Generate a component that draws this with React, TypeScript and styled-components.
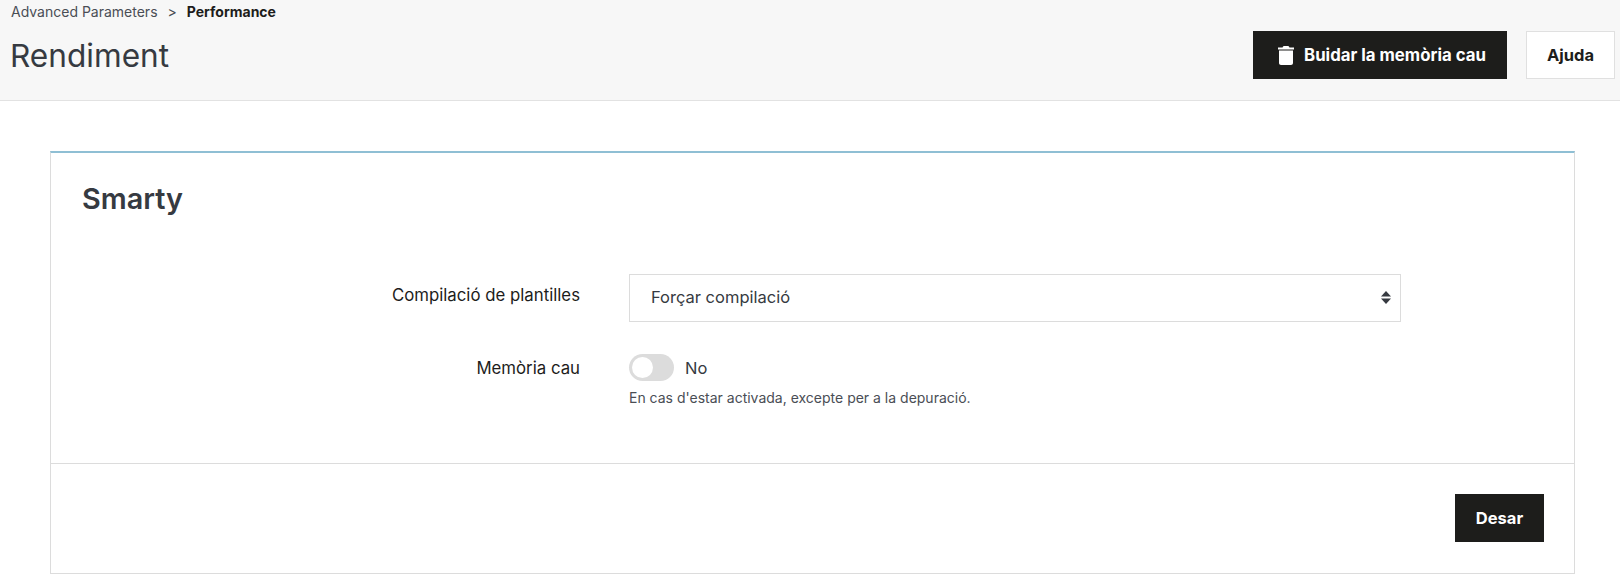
import React from "react";
import styled, { createGlobalStyle } from "styled-components";

const Global = createGlobalStyle`
  html, body { margin: 0; padding: 0; background: #fff; }
  body { font-family: Inter, "Noto Sans", sans-serif; color: #363a41; }
`;
const Page = styled.div`
  width: 1620px;
  height: 577px;
  overflow: hidden;
`;
const Header = styled.header`
  height: 100px;
  background: #f7f7f7;
  border-bottom: 1px solid #e2e2e2;
  padding: 0 5px 0 11px;
  display: flex;
  justify-content: space-between;
`;
const TitleColumn = styled.div`
  display: flex;
  flex-direction: column;
`;
const Breadcrumb = styled.div`
  display: flex;
  font-size: 14px;
  line-height: 24px;
  color: #4a4e55;
`;
const Separator = styled.span`
  margin: 0 10px;
`;
const CurrentCrumb = styled.span`
  font-weight: 700;
  font-size: 14px;
  color: #1d1d1b;
`;
const Title = styled.h1`
  margin: 12px 0 0 -1px;
  font-size: 31.6px;
  line-height: 40px;
  font-weight: 400;
  color: #363a41;
`;
const Actions = styled.div`
  display: flex;
  gap: 19px;
  padding-top: 31px;
`;
const DarkButton = styled.button<{ $w: number; $fs: number; $pl: number }>`
  height: 48px;
  border: 0;
  background: #1d1d1b;
  color: #fff;
  font-family: Inter, sans-serif;
  font-weight: 700;
  font-size: ${(p) => p.$fs}px;
  display: flex;
  align-items: center;
  justify-content: center;
  gap: 10px;
  padding: 0 0 0 ${(p) => p.$pl}px;
  width: ${(p) => p.$w}px;
`;
const LightButton = styled.button`
  width: 89px;
  height: 48px;
  border: 1px solid #e0e0e0;
  background: #fff;
  color: #1d1d1b;
  font-family: Inter, sans-serif;
  font-weight: 700;
  font-size: 16.5px;
  padding: 0;
`;
const Main = styled.main`
  padding: 50px 45px 0 50px;
`;
const Card = styled.section`
  height: 423px;
  box-sizing: border-box;
  border: 1px solid #dcdcdc;
  border-top: 2px solid #8fbfd4;
  display: flex;
  flex-direction: column;
`;
const CardBody = styled.div`
  flex: 1;
  padding: 28px 30px 0;
`;
const CardTitle = styled.h2`
  margin: 0 0 57px 1px;
  font-size: 28.8px;
  line-height: 36px;
  font-weight: 600;
  color: #363a41;
`;
const FormRow = styled.div<{ $mb: number }>`
  display: grid;
  grid-template-columns: 499px 772px;
  column-gap: 49px;
  margin-bottom: ${(p) => p.$mb}px;
`;
const Label = styled.label<{ $pt: number }>`
  text-align: right;
  font-size: 16.8px;
  line-height: 24px;
  color: #1d1d1b;
  padding-top: ${(p) => p.$pt}px;
`;
const SelectBox = styled.div`
  height: 48px;
  box-sizing: border-box;
  border: 1px solid #dcdcdc;
  padding: 0 9px 2px 21px;
  display: flex;
  align-items: center;
  justify-content: space-between;
  font-size: 16.5px;
  color: #363a41;
`;
const ToggleRow = styled.div`
  display: flex;
  align-items: center;
  gap: 11px;
  height: 27px;
  font-size: 16.5px;
  color: #363a41;
`;
const Track = styled.span`
  position: relative;
  width: 45px;
  height: 27px;
  border-radius: 14px;
  background: #dcdcdc;
`;
const Knob = styled.span`
  position: absolute;
  left: 3px;
  top: 3px;
  width: 21px;
  height: 21px;
  border-radius: 50%;
  background: #fff;
`;
const Help = styled.div`
  margin-top: 8px;
  font-size: 14px;
  line-height: 18px;
  color: #4a4e55;
`;
const Footer = styled.div`
  height: 110px;
  box-sizing: border-box;
  border-top: 1px solid #dcdcdc;
  padding: 30px 30px 0;
  display: flex;
  justify-content: flex-end;
`;

const Trash = () => (
  <svg width="16" height="19" viewBox="0 0 16 19" fill="#fff">
    <path d="M5 .6C5.200.2 5.500 0 6 0h4c.5 0 .8.2 1 .6l.4.8H16v2.100H0V1.400h4.600z" />
    <path d="M1 4.500h14v12.500c0 1.100-.9 2-2 2H3c-1.100 0-2-.9-2-2z" />
  </svg>
);
const Arrows = () => (
  <svg width="10" height="13" viewBox="0 0 10 13" fill="#363a41">
    <path d="M5 0l5 5.500H0z" />
    <path d="M0 7.500h10L5 13z" />
  </svg>
);

export default function App() {
  return (
    <Page>
      <Global />
      <Header>
        <TitleColumn>
          <Breadcrumb>
            <span>Advanced Parameters</span>
            <Separator>&gt;</Separator>
            <CurrentCrumb>Performance</CurrentCrumb>
          </Breadcrumb>
          <Title>Rendiment</Title>
        </TitleColumn>
        <Actions>
          <DarkButton $w={254} $fs={16.8} $pl={4}>
            <Trash />
            Buidar la memòria cau
          </DarkButton>
          <LightButton>Ajuda</LightButton>
        </Actions>
      </Header>
      <Main>
        <Card>
          <CardBody>
            <CardTitle>Smarty</CardTitle>
            <FormRow $mb={32}>
              <Label $pt={9}>Compilació de plantilles</Label>
              <SelectBox>
                Forçar compilació
                <Arrows />
              </SelectBox>
            </FormRow>
            <FormRow $mb={0}>
              <Label $pt={2}>Memòria cau</Label>
              <div>
                <ToggleRow>
                  <Track>
                    <Knob />
                  </Track>
                  No
                </ToggleRow>
                <Help>En cas d'estar activada, excepte per a la depuració.</Help>
              </div>
            </FormRow>
          </CardBody>
          <Footer>
            <DarkButton $w={89} $fs={16.5} $pl={0}>Desar</DarkButton>
          </Footer>
        </Card>
      </Main>
    </Page>
  );
}
